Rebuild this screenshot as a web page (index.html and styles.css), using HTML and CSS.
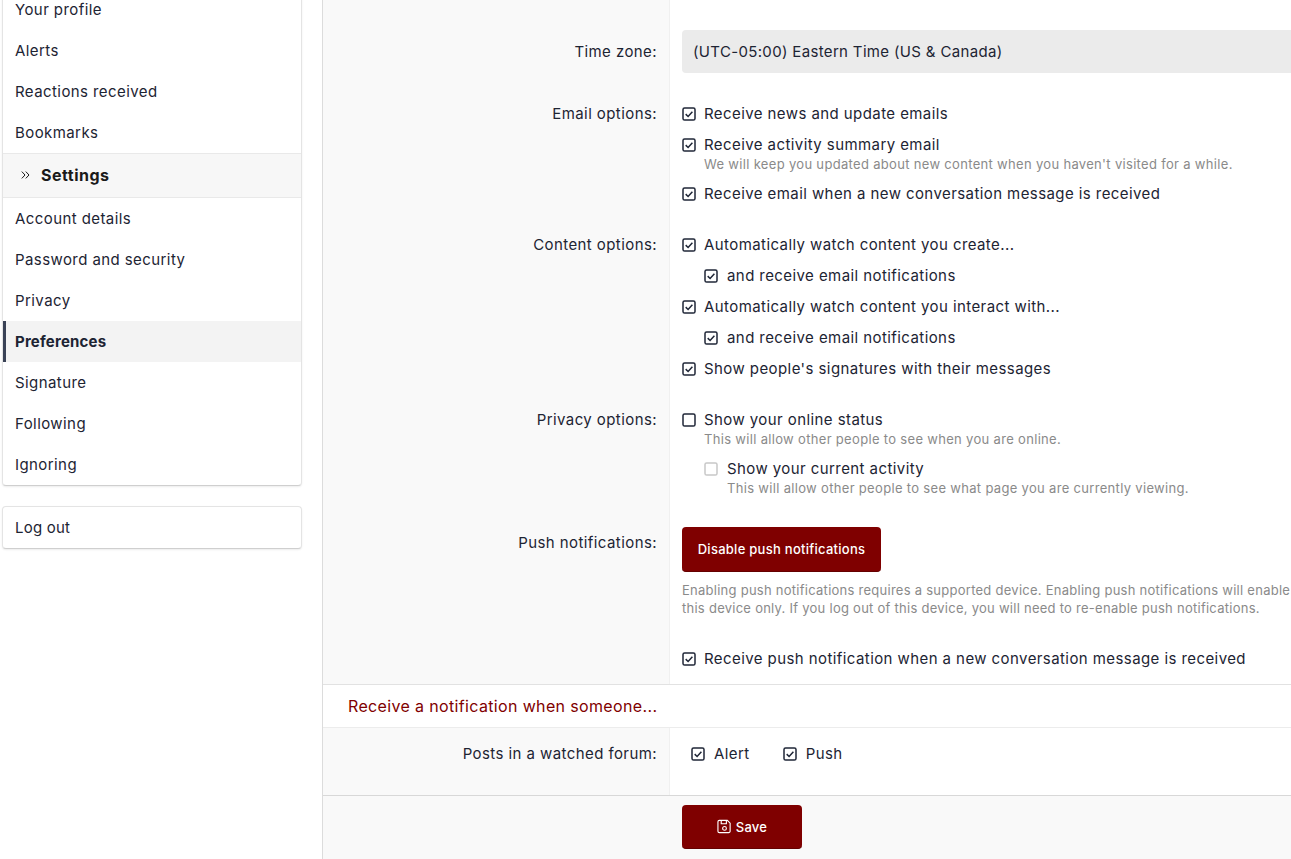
FILE: index.html
```html
<!DOCTYPE html>
<html lang="en">
<head>
<meta charset="utf-8">
<title>Preferences</title>
<link rel="stylesheet" href="styles.css">
</head>
<body>
<svg class="defs" aria-hidden="true">
  <symbol id="on" viewBox="0 0 14 14"><rect x="1" y="1" width="12" height="12" rx="1.6" fill="none" stroke="currentColor" stroke-width="1.5"/><path d="M3.7 7.1 6.1 9.5 10.4 4.7" fill="none" stroke="currentColor" stroke-width="1.5"/></symbol>
  <symbol id="off" viewBox="0 0 14 14"><rect x="1" y="1" width="12" height="12" rx="1.6" fill="none" stroke="currentColor" stroke-width="1.5"/></symbol>
</svg>
<div class="page">
  <aside class="side">
    <nav class="box">
      <a class="item">Your profile</a>
      <a class="item">Alerts</a>
      <a class="item">Reactions received</a>
      <a class="item">Bookmarks</a>
      <h3 class="side-head"><svg class="chev" viewBox="0 0 9 8"><path d="M.8.6 4 4 .8 7.4M4.8.6 8 4 4.8 7.4" fill="none" stroke="currentColor" stroke-width="1"/></svg>Settings</h3>
      <a class="item">Account details</a>
      <a class="item">Password and security</a>
      <a class="item">Privacy</a>
      <a class="item active">Preferences</a>
      <a class="item">Signature</a>
      <a class="item">Following</a>
      <a class="item">Ignoring</a>
    </nav>
    <nav class="box">
      <a class="item logout">Log out</a>
    </nav>
  </aside>
  <main class="main">
    <section class="row first">
      <div class="label">Time zone:</div>
      <div class="field"><div class="select">(UTC-05:00) Eastern Time (US &amp; Canada)</div></div>
    </section>
    <section class="row">
      <div class="label">Email options:</div>
      <div class="field list">
        <label class="check"><svg class="box-ic"><use href="#on"/></svg><span>Receive news and update emails</span></label>
        <label class="check"><svg class="box-ic"><use href="#on"/></svg><span>Receive activity summary email<small>We will keep you updated about new content when you haven't visited for a while.</small></span></label>
        <label class="check"><svg class="box-ic"><use href="#on"/></svg><span>Receive email when a new conversation message is received</span></label>
      </div>
    </section>
    <section class="row">
      <div class="label">Content options:</div>
      <div class="field list">
        <label class="check"><svg class="box-ic"><use href="#on"/></svg><span>Automatically watch content you create...</span></label>
        <label class="check sub"><svg class="box-ic"><use href="#on"/></svg><span>and receive email notifications</span></label>
        <label class="check"><svg class="box-ic"><use href="#on"/></svg><span>Automatically watch content you interact with...</span></label>
        <label class="check sub"><svg class="box-ic"><use href="#on"/></svg><span>and receive email notifications</span></label>
        <label class="check"><svg class="box-ic"><use href="#on"/></svg><span>Show people's signatures with their messages</span></label>
      </div>
    </section>
    <section class="row">
      <div class="label">Privacy options:</div>
      <div class="field list">
        <label class="check"><svg class="box-ic"><use href="#off"/></svg><span>Show your online status<small>This will allow other people to see when you are online.</small></span></label>
        <label class="check sub"><svg class="box-ic dim"><use href="#off"/></svg><span>Show your current activity<small>This will allow other people to see what page you are currently viewing.</small></span></label>
      </div>
    </section>
    <section class="row last">
      <div class="label label-btn">Push notifications:</div>
      <div class="field">
        <button class="btn push" type="button">Disable push notifications</button>
        <p class="note">Enabling push notifications requires a supported device. Enabling push notifications will enable<br>this device only. If you log out of this device, you will need to re-enable push notifications.</p>
        <label class="check"><svg class="box-ic"><use href="#on"/></svg><span>Receive push notification when a new conversation message is received</span></label>
      </div>
    </section>
    <h2 class="subhead">Receive a notification when someone...</h2>
    <section class="row watched">
      <div class="label">Posts in a watched forum:</div>
      <div class="field inline">
        <label class="check"><svg class="box-ic"><use href="#on"/></svg><span>Alert</span></label>
        <label class="check"><svg class="box-ic"><use href="#on"/></svg><span>Push</span></label>
      </div>
    </section>
    <footer class="foot">
      <button class="btn save" type="button"><svg class="save-ic" viewBox="0 0 16 16"><path d="M2.5 1.5h8.5l3 3v8.5a1.5 1.5 0 0 1-1.5 1.5h-10a1.5 1.5 0 0 1-1.5-1.5v-10a1.5 1.5 0 0 1 1.5-1.5zM4.5 1.5v3.5h5.5v-3.5" fill="none" stroke="currentColor" stroke-width="1.2"/><circle cx="8" cy="10" r="2" fill="none" stroke="currentColor" stroke-width="1.2"/></svg>Save</button>
    </footer>
  </main>
</div>
</body>
</html>
```
FILE: styles.css
```css
html, body {
  margin: 0;
  height: 859px;
  overflow: hidden;
  background: #fff;
}
body {
  font-family: Inter, "Noto Sans", sans-serif;
  font-size: 15px;
  letter-spacing: .42px;
  color: #1d2433;
}
.defs { display: none; }
.page {
  display: flex;
  width: 1700px;
  margin-top: -11px;
  padding-left: 2px;
  gap: 20px;
}
.side { width: 300px; flex: none; }
.box {
  display: flex;
  flex-direction: column;
  background: #fff;
  border: 1px solid #e4e4e4;
  border-bottom-color: #cfcfcf;
  border-radius: 4px;
  box-shadow: 0 1px 2px rgba(0,0,0,.08);
  margin-bottom: 20px;
}
.box:first-child { border-top: 0; }
.item {
  height: 41px;
  line-height: 41px;
  padding-left: 12px;
}
.logout { letter-spacing: .2px; }
.active {
  font-weight: 700;
  letter-spacing: .2px;
  background: #f3f3f3;
  border-left: 3px solid #3a4256;
  padding-left: 9px;
}
.side-head {
  display: flex;
  align-items: center;
  margin: 0;
  height: 41px;
  padding: 0 0 2px 18px;
  font-size: 16px;
  font-weight: 700;
  letter-spacing: .5px;
  color: #1a1a1a;
  background: #f7f7f7;
  border-top: 1px solid #e9e9e9;
  border-bottom: 1px solid #e9e9e9;
}
.chev {
  width: 9px;
  height: 8px;
  margin-right: 11px;
}
.main {
  flex: 1;
  border-left: 1px solid #dcdcdc;
}
.row {
  display: grid;
  grid-template-columns: 347px 1fr;
  background: #fff;
}
.label {
  background: #f9f9f9;
  border-right: 1px solid #f0f0f0;
  text-align: right;
  padding: 12px 12px 17px 0;
  line-height: 22px;
}
.field { padding: 12px 12px 17px; }
.first .label { padding-top: 52px; padding-bottom: 0; }
.first .field { padding-top: 41px; padding-bottom: 18px; }
.select {
  height: 43px;
  line-height: 43px;
  padding-left: 11px;
  background: #ebebeb;
  border-radius: 4px;
  letter-spacing: .34px;
}
.list { display: flex; flex-direction: column; gap: 9px; }
.check {
  display: flex;
  gap: 8px;
  line-height: 22px;
}
.check small {
  display: block;
  margin: -1px 0 1px;
  font-size: 13px;
  line-height: 18px;
  letter-spacing: .32px;
  color: #8a8a8a;
}
.box-ic {
  width: 14px;
  height: 14px;
  flex: none;
  margin-top: 4px;
  color: #1f2637;
}
.box-ic.dim { color: #c8c8c8; }
.sub { padding-left: 22px; gap: 9px; }
.btn {
  display: inline-flex;
  align-items: center;
  justify-content: center;
  font-family: inherit;
  color: #fff;
  background: #7f0000;
  border: 0;
  border-bottom: 1px solid #650000;
  border-radius: 4px;
  font-size: 13px;
  font-weight: 500;
  letter-spacing: .27px;
}
.push { width: 199px; height: 45px; }
.save { width: 120px; height: 44px; gap: 4px; }
.save-ic { width: 15px; height: 15px; }
.note {
  margin: 9px 0 31px;
  font-size: 13px;
  line-height: 18px;
  letter-spacing: .26px;
  color: #8a8a8a;
  white-space: nowrap;
}
.label-btn { padding-top: 17px; }
.last .field { padding-bottom: 14px; }
.subhead {
  margin: 0;
  height: 42px;
  line-height: 42px;
  padding-left: 25px;
  font-size: 16px;
  font-weight: 400;
  letter-spacing: .35px;
  color: #7f0000;
  background: #fff;
  border-top: 1px solid #e2e2e2;
  border-bottom: 1px solid #ececec;
}
.watched .field, .watched .label { padding-top: 15px; padding-bottom: 30px; }
.inline { display: flex; gap: 33px; padding-left: 21px; }
.inline .check { gap: 9px; }
.foot {
  background: #f9f9f9;
  border-top: 1px solid #d8d8d8;
  padding: 9px 0 10px 359px;
  height: 64px;
  box-sizing: border-box;
}
```
